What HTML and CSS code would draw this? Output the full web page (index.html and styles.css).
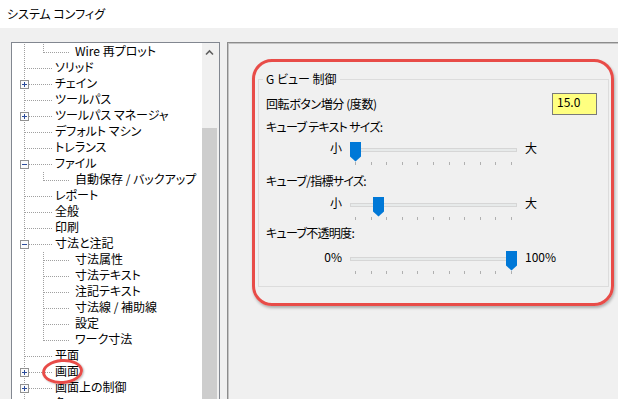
FILE: index.html
```html
<!DOCTYPE html>
<html lang="ja">
<head>
<meta charset="utf-8">
<title>システム コンフィグ</title>
<link rel="stylesheet" href="styles.css">
</head>
<body>
<div class="titlebar">システム コンフィグ</div>
<div class="main">
  <div class="tree">
    <div class="list">
      <div class="row"><span class="pass"></span><span class="ind2 last"></span><span class="txt">Wire 再プロット</span></div>
      <div class="row"><span class="ind"></span><span class="txt">ソリッド</span></div>
      <div class="row"><span class="ind"><svg class="exp" width="9" height="9" viewBox="0 0 9 9"><rect x="0.5" y="0.5" width="8" height="8" fill="#fbfbfb" stroke="#919191"/><path d="M2 4.5h5M4.5 2v5" stroke="#2b4c9b"/></svg></span><span class="txt">チェイン</span></div>
      <div class="row"><span class="ind"></span><span class="txt">ツールパス</span></div>
      <div class="row"><span class="ind"><svg class="exp" width="9" height="9" viewBox="0 0 9 9"><rect x="0.5" y="0.5" width="8" height="8" fill="#fbfbfb" stroke="#919191"/><path d="M2 4.5h5M4.5 2v5" stroke="#2b4c9b"/></svg></span><span class="txt">ツールパス マネージャ</span></div>
      <div class="row"><span class="ind"></span><span class="txt">デフォルト マシン</span></div>
      <div class="row"><span class="ind"></span><span class="txt">トレランス</span></div>
      <div class="row"><span class="ind"><svg class="exp" width="9" height="9" viewBox="0 0 9 9"><rect x="0.5" y="0.5" width="8" height="8" fill="#fbfbfb" stroke="#919191"/><path d="M2 4.5h5" stroke="#2b4c9b"/></svg></span><span class="txt">ファイル</span></div>
      <div class="row"><span class="pass"></span><span class="ind2 last"></span><span class="txt">自動保存 / バックアップ</span></div>
      <div class="row"><span class="ind"></span><span class="txt">レポート</span></div>
      <div class="row"><span class="ind"></span><span class="txt">全般</span></div>
      <div class="row"><span class="ind"></span><span class="txt">印刷</span></div>
      <div class="row"><span class="ind"><svg class="exp" width="9" height="9" viewBox="0 0 9 9"><rect x="0.5" y="0.5" width="8" height="8" fill="#fbfbfb" stroke="#919191"/><path d="M2 4.5h5" stroke="#2b4c9b"/></svg></span><span class="txt">寸法と注記</span></div>
      <div class="row"><span class="pass"></span><span class="ind2"></span><span class="txt">寸法属性</span></div>
      <div class="row"><span class="pass"></span><span class="ind2"></span><span class="txt">寸法テキスト</span></div>
      <div class="row"><span class="pass"></span><span class="ind2"></span><span class="txt">注記テキスト</span></div>
      <div class="row"><span class="pass"></span><span class="ind2"></span><span class="txt">寸法線 / 補助線</span></div>
      <div class="row"><span class="pass"></span><span class="ind2"></span><span class="txt">設定</span></div>
      <div class="row"><span class="pass"></span><span class="ind2 last"></span><span class="txt">ワーク寸法</span></div>
      <div class="row"><span class="ind"></span><span class="txt">平面</span></div>
      <div class="row"><span class="ind"><svg class="exp" width="9" height="9" viewBox="0 0 9 9"><rect x="0.5" y="0.5" width="8" height="8" fill="#fbfbfb" stroke="#919191"/><path d="M2 4.5h5M4.5 2v5" stroke="#2b4c9b"/></svg></span><span class="txt circled">画面</span></div>
      <div class="row"><span class="ind"><svg class="exp" width="9" height="9" viewBox="0 0 9 9"><rect x="0.5" y="0.5" width="8" height="8" fill="#fbfbfb" stroke="#919191"/><path d="M2 4.5h5M4.5 2v5" stroke="#2b4c9b"/></svg></span><span class="txt">画面上の制御</span></div>
      <div class="row"><span class="ind"></span><span class="txt">色</span></div>
    </div>
    <div class="vscroll">
      <div class="sarrow"><svg width="17" height="17" viewBox="0 0 17 17"><path d="M4 11.5L7.5 8L11 11.5" fill="none" stroke="#606060" stroke-width="1.6"/></svg></div>
      <div class="sspace"></div>
      <div class="sthumb"></div>
    </div>
  </div>

  <div class="panel">
    <div class="callout">
      <fieldset class="group">
        <legend>G ビュー 制御</legend>
        <div class="field-row">
          <span class="lbl-inline">回転ボタン増分 (度数)</span>
          <span class="num">15.0</span>
        </div>
        <div class="lbl l1">キューブ テキスト サイズ:</div>
        <div class="slider s1">
          <span class="end-l">小</span>
          <div class="track-area">
            <div class="track"></div>
            <div class="ticks"><i></i><i></i><i></i><i></i><i></i><i></i><i></i><i></i><i></i><i></i><i></i></div>
            <svg class="thumb" style="left:0px" width="11" height="20" viewBox="0 0 11 20"><polygon points="0,0 11,0 11,14.5 5.5,19.5 0,14.5" fill="#0078d7"/></svg>
          </div>
          <span class="end-r">大</span>
        </div>
        <div class="lbl l2">キューブ/指標サイズ:</div>
        <div class="slider s2">
          <span class="end-l">小</span>
          <div class="track-area">
            <div class="track"></div>
            <div class="ticks"><i></i><i></i><i></i><i></i><i></i><i></i><i></i><i></i><i></i><i></i><i></i></div>
            <svg class="thumb" style="left:23px" width="11" height="20" viewBox="0 0 11 20"><polygon points="0,0 11,0 11,14.5 5.5,19.5 0,14.5" fill="#0078d7"/></svg>
          </div>
          <span class="end-r">大</span>
        </div>
        <div class="lbl l3">キューブ不透明度:</div>
        <div class="slider s3">
          <span class="end-l">0%</span>
          <div class="track-area">
            <div class="track"></div>
            <div class="ticks"><i></i><i></i><i></i><i></i><i></i><i></i><i></i><i></i><i></i><i></i><i></i></div>
            <svg class="thumb" style="left:156px" width="11" height="20" viewBox="0 0 11 20"><polygon points="0,0 11,0 11,14.5 5.5,19.5 0,14.5" fill="#0078d7"/></svg>
          </div>
          <span class="end-r">100%</span>
        </div>
      </fieldset>
    </div>
  </div>
</div>
</body>
</html>
```

FILE: styles.css
```css
* { box-sizing: border-box; }
html, body { margin: 0; padding: 0; }
body {
  width: 618px;
  height: 399px;
  overflow: hidden;
  background: #f0f0f0;
  font-family: "Noto Sans CJK JP", "Noto Sans", sans-serif;
  font-size: 12px;
  color: #000;
  font-feature-settings: "palt";
}

.titlebar {
  height: 28px;
  background: #fff;
  padding-left: 7px;
  line-height: 27px;
  white-space: nowrap;
}

.main {
  display: flex;
  align-items: flex-start;
  padding: 14px 0 0 11px;
}

/* ---------- tree ---------- */
.tree {
  flex: none;
  width: 209px;
  height: 380px;
  border: 1px solid #828790;
  background: #fff;
  display: flex;
}
.list {
  flex: 1;
  padding-top: 1px;
  overflow: hidden;
}
.row {
  display: flex;
  align-items: flex-start;
  height: 16px;
}
.ind, .pass, .ind2 {
  flex: none;
  height: 16px;
  background-repeat: no-repeat;
}
.ind {
  width: 43px;
  padding: 4px 0 0 8px;
  background-image:
    repeating-linear-gradient(to bottom, #a0a0a0 0 1px, transparent 1px 2px),
    repeating-linear-gradient(to right, #a0a0a0 0 1px, transparent 1px 2px);
  background-position: 12px 0, 13px 8px;
  background-size: 1px 100%, 27px 1px;
}
.exp { display: block; }
.pass {
  width: 19px;
  background-image: repeating-linear-gradient(to bottom, #a0a0a0 0 1px, transparent 1px 2px);
  background-position: 12px 0;
  background-size: 1px 100%;
}
.ind2 {
  width: 44px;
  background-image:
    repeating-linear-gradient(to bottom, #a0a0a0 0 1px, transparent 1px 2px),
    repeating-linear-gradient(to right, #a0a0a0 0 1px, transparent 1px 2px);
  background-position: 12px 0, 13px 8px;
  background-size: 1px 100%, 26px 1px;
}
.ind2.last { background-size: 1px 9px, 26px 1px; }
.txt {
  line-height: 13px;
  white-space: nowrap;
}
.circled { position: relative; }
.circled::after {
  content: "";
  position: absolute;
  left: -13px;
  right: -4px;
  top: -5px;
  bottom: -7px;
  border: 3px solid #e84c48;
  border-radius: 50%;
  box-shadow: 1px 1px 2px rgba(0, 0, 0, 0.25);
  transform: rotate(-4deg);
}

.vscroll {
  flex: none;
  width: 17px;
  background: #f0f0f0;
  display: flex;
  flex-direction: column;
}
.sarrow { height: 17px; }
.sarrow svg { display: block; }
.sspace { height: 68px; }
.sthumb {
  flex: 1;
  background: #cdcdcd;
  margin-right: 2px;
}

/* ---------- right panel ---------- */
.panel {
  flex: none;
  width: 420px;
  height: 380px;
  margin-left: 7px;
  border: 1px solid #8c8c8c;
  box-shadow: inset 1px 1px 0 #c4c4c4;
  padding: 16px 0 0 24px;
}
.callout {
  width: 362px;
  border: 3px solid #e84c48;
  border-radius: 20px;
  padding: 9px 2px 16px 3px;
  box-shadow: 1px 2px 3px rgba(0, 0, 0, 0.28);
}
.group {
  margin: 0;
  min-width: 0;
  border: 1px solid #dcdcdc;
  padding: 6px 11px 12px 7px;
}
.group legend {
  padding: 0 3px;
  margin-left: -3px;
  line-height: 16px;
}
.field-row {
  display: flex;
  justify-content: space-between;
  align-items: center;
  height: 22px;
}
.lbl-inline, .lbl { line-height: 16px; white-space: nowrap; }
.lbl-inline { letter-spacing: -0.4px; }
.lbl { letter-spacing: -0.7px; }
.num {
  width: 45px;
  height: 22px;
  border: 1px solid #7a7a7a;
  background: #ffff80;
  padding-left: 4px;
  line-height: 15px;
}
.l1 { margin-top: 4px; }
.s1 { margin-top: 7px; }
.l2 { margin-top: 8px; }
.s2 { margin-top: 8px; }
.l3 { margin-top: 5px; }
.s3 { margin-top: 10px; }

.slider {
  display: flex;
  align-items: flex-start;
  height: 23px;
}
.end-l {
  width: 76px;
  text-align: right;
  line-height: 11px;
  white-space: nowrap;
}
.end-r {
  margin-left: 8px;
  line-height: 11px;
  white-space: nowrap;
}
.track-area {
  position: relative;
  width: 167px;
  height: 23px;
  margin-left: 8px;
}
.track {
  margin-top: 6px;
  height: 4px;
  border: 1px solid #d6d6d6;
  background: #e7eaea;
}
.ticks {
  display: flex;
  justify-content: space-between;
  padding: 0 5px;
  margin-top: 10px;
  height: 3px;
}
.ticks i {
  width: 1px;
  height: 3px;
  background: #b0b0b0;
}
.thumb {
  position: absolute;
  top: 0;
  display: block;
}
```
